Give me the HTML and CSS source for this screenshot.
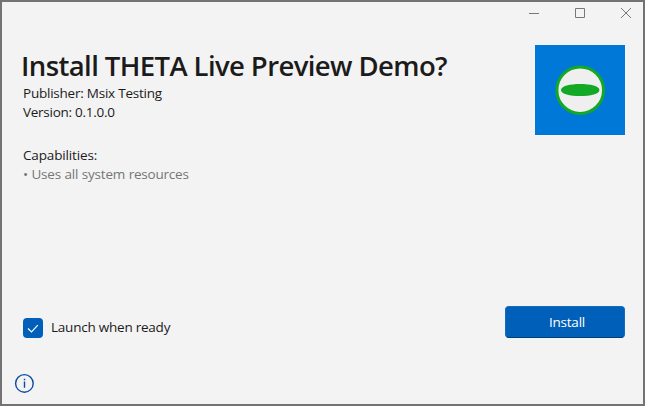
FILE: index.html
```
<!DOCTYPE html>
<html lang="en">
<head>
<meta charset="utf-8">
<title>App Installer</title>
<link rel="stylesheet" href="styles.css">
</head>
<body>
<div class="window">
  <div class="titlebar">
    <svg class="caption" viewBox="0 0 46 24"><path d="M18 11.5h10"/></svg>
    <svg class="caption" viewBox="0 0 46 24"><path d="M18.5 6.5h9v9h-9z"/></svg>
    <svg class="caption" viewBox="0 0 46 24"><path d="M18 6l10 10M28 6l-10 10"/></svg>
  </div>
  <main class="content">
    <section class="info">
      <h1 class="title">Install THETA Live Preview Demo?</h1>
      <p class="line publisher">Publisher: Msix Testing</p>
      <p class="line version">Version: 0.1.0.0</p>
      <p class="line heading">Capabilities:</p>
      <p class="line muted">• Uses all system resources</p>
    </section>
    <svg class="logo" viewBox="0 0 90 90">
      <circle cx="45.2" cy="45.2" r="23.3"/>
      <path d="M26 45c0-4 9-6 19.200-6s19.200 2 19.200 6-9 6-19.200 6-19.200-2-19.200-6z"/>
    </svg>
  </main>
  <div class="actions">
    <label class="launch">
      <svg class="checkbox" viewBox="0 0 20 20"><path d="M5 10.500l3.500 3.500 6.300-6.800"/></svg>
      <span class="launch-text">Launch when ready</span>
    </label>
    <button class="install">Install</button>
  </div>
  <footer class="footer">
    <svg class="about" viewBox="0 0 20 20"><circle cx="10.400" cy="10.400" r="8.800"/><path d="M10.500 8.500v6.200M10.500 5.700v1.500"/></svg>
  </footer>
</div>
</body>
</html>
```
FILE: styles.css
```
* { box-sizing: border-box; }
body {
  margin: 0;
  font-family: "Open Sans", "Noto Sans", sans-serif;
  font-size: 13.5px;
  letter-spacing: -0.23px;
  color: #1b1b1b;
}
.window {
  display: flex;
  flex-direction: column;
  width: 645px;
  height: 406px;
  border: 2px solid #737373;
  background: #f3f3f3;
}
.titlebar {
  display: flex;
  justify-content: flex-end;
  height: 43px;
}
.caption {
  width: 46px;
  height: 24px;
  fill: none;
  stroke: #777;
  stroke-width: 1;
}
.caption:last-child { margin-right: -6px; }
.content {
  display: flex;
  justify-content: space-between;
  height: 261px;
  padding: 0 18px 0 19px;
}
.info { padding-top: 3px; white-space: nowrap; }
.title {
  margin: 0;
  font-size: 27.5px;
  font-weight: 600;
  line-height: 36px;
  letter-spacing: -0.6px;
}
.line { margin: 0 0 0 2px; line-height: 19px; }
.version { letter-spacing: -0.27px; }
.heading { margin-top: 24px; letter-spacing: -0.15px; }
.muted { color: #767676; letter-spacing: -0.21px; word-spacing: 0.3px; }
.logo {
  flex: none;
  width: 90px;
  height: 90px;
  background: #0078d7;
}
.logo circle { fill: #efefef; stroke: #13a925; stroke-width: 3; }
.logo path { fill: #13a925; }
.actions {
  display: flex;
  justify-content: space-between;
  height: 32px;
  padding: 0 18px 0 21px;
}
.launch { display: flex; padding-top: 12px; line-height: 18px; }
.checkbox {
  width: 20px;
  height: 20px;
  margin-right: 8px;
  border-radius: 4px;
  background: #005fb8;
  fill: none;
  stroke: #fff;
  stroke-width: 1.200;
}
.install {
  width: 120px;
  height: 32px;
  padding: 0 0 1px 4px;
  border: 1px solid #146cbe;
  border-bottom-color: #003e78;
  border-radius: 4px;
  background: #005fb8;
  color: #fff;
  font: inherit;
  letter-spacing: inherit;
}
.footer { padding: 35px 0 0 12px; }
.about {
  display: block;
  width: 20px;
  height: 20px;
  fill: none;
  stroke: #0a4ba3;
  stroke-width: 1.400;
}
```
